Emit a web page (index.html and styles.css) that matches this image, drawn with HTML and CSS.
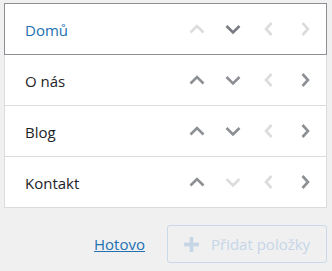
FILE: index.html
```html
<!DOCTYPE html>
<html lang="cs">
<head>
<meta charset="utf-8">
<link rel="stylesheet" href="styles.css">
</head>
<body>
<ul class="menu">
  <li class="item focused">
    <span class="title current">Domů</span>
    <div class="nav">
      <button class="arrow off"><svg viewBox="0 0 20 20"><polyline points="3.5,13.5 10,7 16.5,13.5"/></svg></button>
      <button class="arrow on-dark"><svg viewBox="0 0 20 20"><polyline points="3.5,7 10,13.5 16.5,7"/></svg></button>
      <button class="arrow off"><svg viewBox="0 0 20 20"><polyline points="12.5,4 7,10 12.5,16"/></svg></button>
      <button class="arrow off"><svg viewBox="0 0 20 20"><polyline points="7.5,4 13,10 7.5,16"/></svg></button>
    </div>
  </li>
  <li class="item">
    <span class="title">O nás</span>
    <div class="nav">
      <button class="arrow"><svg viewBox="0 0 20 20"><polyline points="3.5,13.5 10,7 16.5,13.5"/></svg></button>
      <button class="arrow"><svg viewBox="0 0 20 20"><polyline points="3.5,7 10,13.5 16.5,7"/></svg></button>
      <button class="arrow off"><svg viewBox="0 0 20 20"><polyline points="12.5,4 7,10 12.5,16"/></svg></button>
      <button class="arrow"><svg viewBox="0 0 20 20"><polyline points="7.5,4 13,10 7.5,16"/></svg></button>
    </div>
  </li>
  <li class="item">
    <span class="title">Blog</span>
    <div class="nav">
      <button class="arrow"><svg viewBox="0 0 20 20"><polyline points="3.5,13.5 10,7 16.5,13.5"/></svg></button>
      <button class="arrow"><svg viewBox="0 0 20 20"><polyline points="3.5,7 10,13.5 16.5,7"/></svg></button>
      <button class="arrow off"><svg viewBox="0 0 20 20"><polyline points="12.5,4 7,10 12.5,16"/></svg></button>
      <button class="arrow"><svg viewBox="0 0 20 20"><polyline points="7.5,4 13,10 7.5,16"/></svg></button>
    </div>
  </li>
  <li class="item">
    <span class="title">Kontakt</span>
    <div class="nav">
      <button class="arrow"><svg viewBox="0 0 20 20"><polyline points="3.5,13.5 10,7 16.5,13.5"/></svg></button>
      <button class="arrow off"><svg viewBox="0 0 20 20"><polyline points="3.5,7 10,13.5 16.5,7"/></svg></button>
      <button class="arrow off"><svg viewBox="0 0 20 20"><polyline points="12.5,4 7,10 12.5,16"/></svg></button>
      <button class="arrow"><svg viewBox="0 0 20 20"><polyline points="7.5,4 13,10 7.5,16"/></svg></button>
    </div>
  </li>
</ul>
<div class="footer">
  <a class="done" href="#">Hotovo</a>
  <button class="add" disabled>
    <svg class="plus" viewBox="0 0 16 16"><rect x="6" y="0" width="4" height="16"/><rect x="0" y="6" width="16" height="4"/></svg>
    <span>Přidat položky</span>
  </button>
</div>
</body>
</html>
```

FILE: styles.css
```css
html, body {
  margin: 0;
  padding: 0;
  background: #f0f0f1;
  font-family: "Open Sans", "Noto Sans", sans-serif;
}
.menu {
  list-style: none;
  margin: 3px 0 0 4px;
  padding: 0;
  width: 323px;
}
.item {
  position: relative;
  box-sizing: border-box;
  height: 52px;
  margin-top: -1px;
  border: 1px solid #dcdcde;
  background: #fff;
  display: flex;
  align-items: center;
  padding-left: 20px;
}
.item:first-child {
  margin-top: 0;
}
.item.focused {
  border-color: #8c8f94;
  z-index: 1;
}
.title {
  flex: 1;
  font-size: 15px;
  color: #1d2327;
  line-height: 20px;
  padding-top: 2px;
}
.title.current {
  color: #2271b1;
}
.nav {
  display: flex;
  padding-right: 3px;
}
.arrow {
  width: 36px;
  height: 36px;
  padding: 0;
  border: 0;
  background: transparent;
  display: flex;
  align-items: center;
  justify-content: center;
  color: #8c8f94;
}
.arrow.on-dark {
  color: #787c82;
}
.arrow.off {
  color: #dcdcde;
}
.arrow svg {
  width: 20px;
  height: 20px;
  fill: none;
  stroke: currentColor;
  stroke-width: 2.6;
}
.footer {
  display: flex;
  justify-content: flex-end;
  align-items: center;
  gap: 22px;
  margin-top: 17px;
  padding-right: 5px;
}
.done {
  font-size: 15px;
  color: #2271b1;
  text-decoration: underline;
}
.add {
  box-sizing: border-box;
  width: 160px;
  height: 38px;
  border: 1px solid #c9d9ea;
  border-radius: 3px;
  background: transparent;
  display: flex;
  align-items: center;
  gap: 12px;
  padding: 0 0 0 16px;
  font-family: "Open Sans", "Noto Sans", sans-serif;
  font-size: 15px;
  color: #c5d6e8;
}
.plus {
  width: 15px;
  height: 15px;
  fill: #c6d6e6;
}
```
